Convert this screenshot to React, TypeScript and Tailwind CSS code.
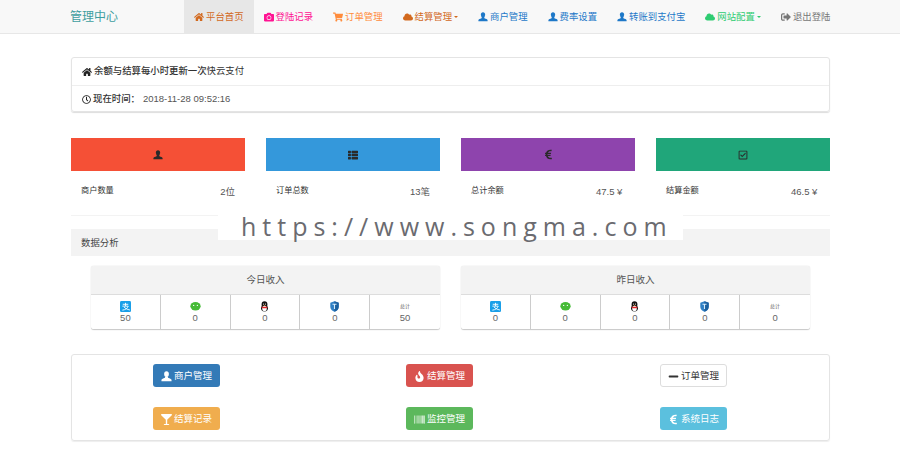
import { ReactNode } from "react";
import {
  FaBarcode,
  FaCamera,
  FaCloud,
  FaEuroSign,
  FaFire,
  FaGlassMartini,
  FaHome,
  FaMinus,
  FaRegCheckSquare,
  FaRegClock,
  FaShoppingCart,
  FaSignOutAlt,
  FaThList,
} from "react-icons/fa";

// glyphicon-user: round head on a flared base
function UserIcon({ className = "" }: { className?: string }) {
  return (
    <svg viewBox="0 0 12 12" fill="currentColor" className={`size-[1em] ${className}`}>
      <ellipse cx="6" cy="3.4" rx="2.6" ry="3.2" />
      <path d="M4.6 6h2.8l.3 1.4c2 .6 3.4 1.3 3.8 2.2v1.6H.5V9.6c.4-.9 1.8-1.6 3.8-2.2z" />
    </svg>
  );
}

const NAV = [
  { label: "平台首页", icon: <FaHome />, color: "text-[#d2691e]", active: true },
  { label: "登陆记录", icon: <FaCamera />, color: "text-[#ff1493]" },
  { label: "订单管理", icon: <FaShoppingCart />, color: "text-[#ff8c3c]" },
  { label: "结算管理", icon: <FaCloud />, color: "text-[#d2691e]", caret: true },
  { label: "商户管理", icon: <UserIcon />, color: "text-[#1e78c8]" },
  { label: "费率设置", icon: <UserIcon />, color: "text-[#1e78c8]" },
  { label: "转账到支付宝", icon: <UserIcon />, color: "text-[#1e78c8]" },
  { label: "网站配置", icon: <FaCloud />, color: "text-[#2ecc71]", caret: true },
  { label: "退出登陆", icon: <FaSignOutAlt />, color: "text-[#777777]" },
];

const STATS = [
  { label: "商户数量", value: "2位", icon: <UserIcon />, bg: "bg-[#f55036]" },
  { label: "订单总数", value: "13笔", icon: <FaThList />, bg: "bg-[#3498db]" },
  { label: "总计余额", value: "47.5 ¥\u00a0", icon: <FaEuroSign className="text-[11px]" />, bg: "bg-[#8e44ad]" },
  { label: "结算金额", value: "46.5 ¥\u00a0", icon: <FaRegCheckSquare />, bg: "bg-[#20a67a]" },
];

const ACTIONS = [
  { label: "商户管理", icon: <UserIcon />, cls: "bg-[#337ab7] text-white" },
  { label: "结算管理", icon: <FaFire />, cls: "bg-[#d9534f] text-white" },
  { label: "订单管理", icon: <FaMinus />, cls: "bg-white text-[#333333] border border-[#dddddd]" },
  { label: "结算记录", icon: <FaGlassMartini />, cls: "bg-[#f0ad4e] text-white" },
  { label: "监控管理", icon: <FaBarcode />, cls: "bg-[#5cb85c] text-white" },
  { label: "系统日志", icon: <FaEuroSign />, cls: "bg-[#5bc0de] text-white" },
];

function AlipayIcon() {
  return (
    <svg viewBox="0 0 12 12" className="size-[11px]">
      <rect width="12" height="12" rx="1.5" fill="#1a9fe8" />
      <path d="M3 3.6h6M6 2v3.4M2.6 5.6h6.4C8.2 8 5.8 9.6 2.6 10M4.4 6.6c1.4 1.5 3.6 2.6 6.4 3.2" stroke="#fff" strokeWidth="1" fill="none" />
    </svg>
  );
}

function WechatIcon() {
  return (
    <svg viewBox="0 0 12 12" className="size-[11px]">
      <ellipse cx="6" cy="5.8" rx="5.6" ry="4.6" fill="#46bb36" />
      <circle cx="4" cy="4.8" r="0.7" fill="#fff" />
      <circle cx="8" cy="4.8" r="0.7" fill="#fff" />
    </svg>
  );
}

function QqIcon() {
  return (
    <svg viewBox="0 0 12 12" className="size-[11px]">
      <ellipse cx="6" cy="4" rx="3.2" ry="3.6" fill="#111" />
      <ellipse cx="6" cy="8" rx="3.8" ry="3.4" fill="#111" />
      <ellipse cx="6" cy="8.2" rx="2.5" ry="3" fill="#fff" />
      <path d="M2.6 6.2h6.8L8.6 7.8H3.4z" fill="#e0262a" />
      <circle cx="5" cy="3.4" r="0.6" fill="#fff" />
      <circle cx="7" cy="3.4" r="0.6" fill="#fff" />
      <path d="M4.8 4.6h2.4L6 5.4z" fill="#f5a623" />
    </svg>
  );
}

function ShieldIcon() {
  return (
    <svg viewBox="0 0 12 12" className="size-[11px]">
      <path d="M6 .4 10.6 2v4.2C10.6 9 8.4 10.8 6 11.6 3.6 10.8 1.4 9 1.4 6.2V2z" fill="#2f7fc4" />
      <path d="M6 .4 10.6 2v4.2C10.6 9 8.4 10.8 6 11.6z" fill="#1b5f9e" />
      <path d="M3.8 3.6h4.4M6 3.6v5" stroke="#d5ecfa" strokeWidth="1.2" fill="none" />
    </svg>
  );
}

function Caret() {
  return <span className="size-0 border-x-[2.5px] border-t-[2.5px] border-x-transparent border-t-current" />;
}

function IncomeBox({ title, values }: { title: string; values: string[] }) {
  const icons: ReactNode[] = [<AlipayIcon />, <WechatIcon />, <QqIcon />, <ShieldIcon />];
  return (
    <div className="rounded-[3px] border-b border-[#cccccc] shadow-[0_0_1px_#bbbbbb]">
      <div className="flex h-[28px] items-center justify-center rounded-t-[3px] bg-[#f3f3f3] pt-[1px] text-[9.5px] text-[#555555]">
        {title}
      </div>
      <div className="grid h-[35px] grid-cols-5 border-t border-[#dddddd]">
        {values.map((v, i) => (
          <div key={i} className="flex flex-col items-center border-r border-[#cccccc] pt-[6px] last:border-r-0">
            <div className="flex h-[11px] items-center text-[5px] text-[#555555]">{icons[i] ?? "总计"}</div>
            <div className="text-[9.5px] leading-[12px] text-[#666666]">{v}</div>
          </div>
        ))}
      </div>
    </div>
  );
}

export default function App() {
  return (
    <div className="relative h-[454px] w-[900px] overflow-hidden bg-white font-['Liberation_Sans','Noto_Sans_CJK_SC',sans-serif] text-[9.4px] text-[#333333]">
      <header className="flex h-[34px] items-stretch border-b border-[#e7e7e7] bg-[#f8f8f8] pl-[70px]">
        <div className="flex w-[114px] items-center text-[12px] text-[#3f9ea0]">管理中心</div>
        <nav className="flex">
          {NAV.map((n) => (
            <a key={n.label} className={`flex items-center gap-[2px] px-[10px] pt-[1px] ${n.color} ${n.active ? "bg-[#e7e7e7]" : ""}`}>
              <span className="flex w-[10px] justify-center text-[10px]">{n.icon}</span>
              {n.label}
              {n.caret && <Caret />}
            </a>
          ))}
        </nav>
      </header>

      <main className="pl-[71px] pr-[70px]">
        <section className="mt-[23px] rounded-[3px] border border-[#e4e4e4] shadow-[0_1px_1px_#dddddd]">
          <div className="flex h-[28px] items-center gap-[2px] border-b border-[#eeeeee] pl-[10px]">
            <FaHome className="text-[10px] text-[#222222]" />
            <span>
              <b className="font-medium">余额与结算每小时更新一次</b>快云支付
            </span>
          </div>
          <div className="flex h-[25px] items-center gap-[2px] pl-[10px] pt-[1px]">
            <FaRegClock className="text-[9px] text-[#222222]" />
            <b className="font-medium">现在时间：</b>
            <span className="ml-[1px] text-[9.5px] text-[#555555]">2018-11-28 09:52:16</span>
          </div>
        </section>

        <section className="mt-[26px] grid grid-cols-4 gap-x-[21px]">
          {STATS.map((s) => (
            <div key={s.label} className="border-b border-[#f3f3f3]">
              <div className={`flex h-[33px] items-center justify-center text-[10px] text-[#2a2a2a] ${s.bg}`}>{s.icon}</div>
              <div className="flex h-[44px] items-center justify-between px-[10px] pb-[4px]">
                <span className="mt-[1px] text-[8.2px]">{s.label}</span>
                <span className="mt-[2px] text-[9.5px] text-[#555555]">{s.value}</span>
              </div>
            </div>
          ))}
        </section>

        <div className="mt-[13px] flex h-[27px] items-center bg-[#f3f3f3] pl-[10px] pt-[1px] text-[#444444]">数据分析</div>

        <section className="mt-[10px] grid grid-cols-2 gap-x-[21px] px-[20px]">
          <IncomeBox title="今日收入" values={["50", "0", "0", "0", "50"]} />
          <IncomeBox title="昨日收入" values={["0", "0", "0", "0", "0"]} />
        </section>

        <section className="mt-[24px] grid h-[87px] grid-cols-[253px_254px_67px] content-start gap-y-[20px] rounded-[3px] border border-[#e4e4e4] pl-[81px] pt-[9px] shadow-[0_1px_1px_#eeeeee]">
          {ACTIONS.map((a) => (
            <a key={a.label} className={`flex h-[23px] w-[67px] items-center justify-center gap-[2px] rounded-[3px] pt-[1px] text-[9.5px] ${a.cls}`}>
              <span className="flex w-[11px] justify-center text-[11px]">{a.icon}</span>
              {a.label}
            </a>
          ))}
        </section>
      </main>

      <div className="absolute left-[218px] top-[214px] flex h-[26px] w-[465px] items-center bg-white pl-[23px] font-['Open_Sans',sans-serif] text-[25px] tracking-[6px] text-[#6b6b70]">
        https://www.songma.com
      </div>
    </div>
  );
}
